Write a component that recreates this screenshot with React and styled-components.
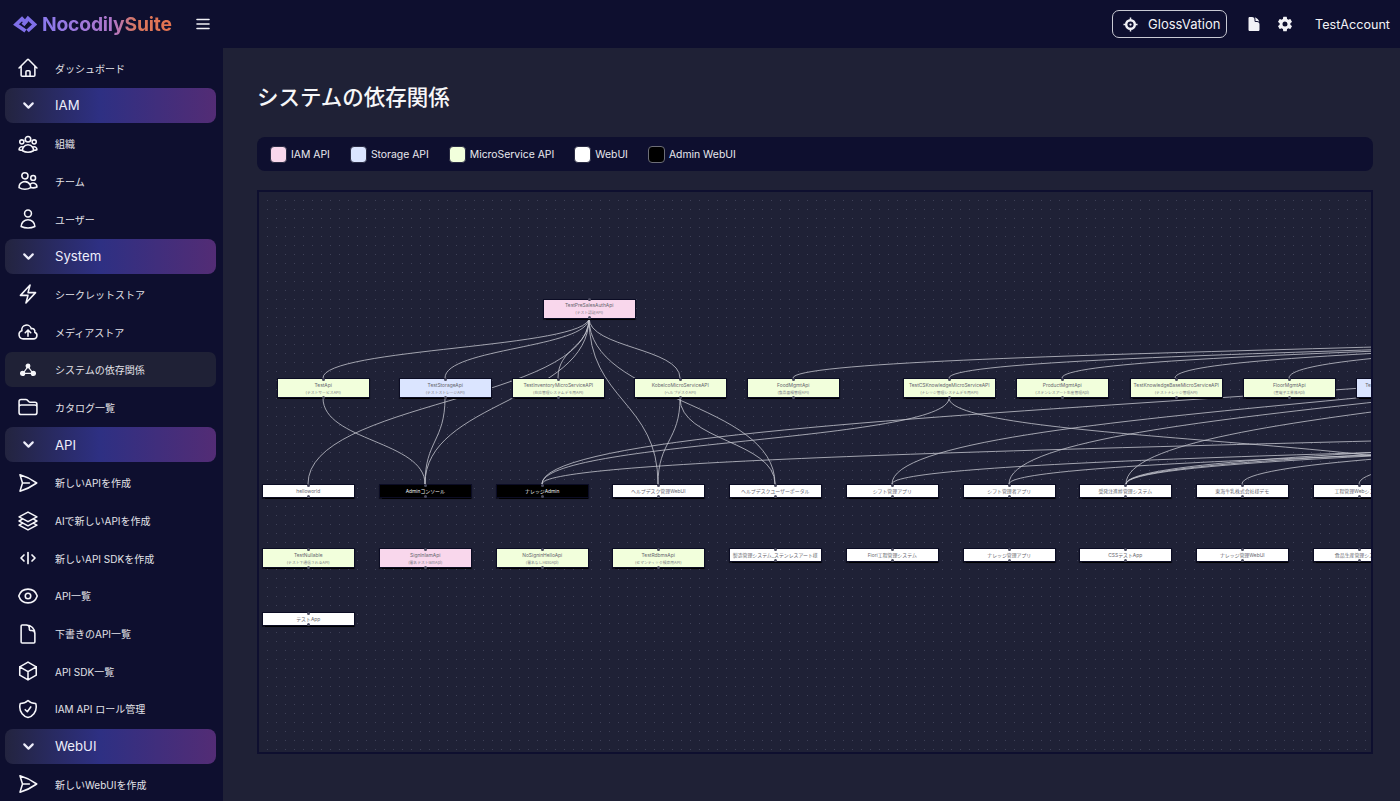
import React from 'react';
import styled, { createGlobalStyle } from 'styled-components';
import {
  HiOutlineHome, HiOutlineUserGroup, HiOutlineUsers, HiOutlineUser, HiOutlineBolt,
  HiOutlineCloudArrowUp, HiOutlineFolder, HiOutlinePaperAirplane, HiOutlineSquare3Stack3D,
  HiOutlineEye, HiOutlineDocument, HiOutlineCube, HiOutlineShieldCheck,
  HiDocument,
} from 'react-icons/hi2';
import { IoSettingsSharp } from 'react-icons/io5';
import { ChevronDown } from 'lucide-react';

const Global = createGlobalStyle`
  html, body { margin: 0; height: 100%; overflow: hidden; background: #1f2136; }
  body, button { font-family: Inter, "Noto Sans CJK JP", sans-serif; }
  #root { height: 100%; }
`;

const Shell = styled.div`
  display: flex; flex-direction: column; height: 801px; overflow: hidden; color: #f2f2f6;
`;
const Header = styled.header`
  flex: 0 0 48px; display: flex; align-items: center; background: #0e0f2f; padding: 0 10px 0 13px;
`;
const Brand = styled.div`display: flex; align-items: center; gap: 5px; width: 182px;`;
const BrandName = styled.span`
  font-size: 19.3px; font-weight: 700; letter-spacing: -0.2px;
  background: linear-gradient(90deg, #8a79ee 0%, #b076c8 55%, #d9775f 72%, #e5734f 100%);
  -webkit-background-clip: text; background-clip: text; color: transparent;
`;
const Burger = styled.button`
  border: 0; background: none; color: #f2f2f6; padding: 0; display: flex;
`;
const HeaderRight = styled.div`margin-left: auto; display: flex; align-items: center;`;
const TenantButton = styled.button`
  display: flex; align-items: center; gap: 10px; height: 28px; width: 115px; padding: 0 0 0 10px;
  border: 1px solid #c9cad3; border-radius: 7px; background: none; color: #f2f2f6;
  font-size: 13px; margin-right: 19px;
`;
const HeaderIcon = styled.span`display: flex; font-size: ${p => p.$size}px; margin-right: ${p => p.$gap}px;`;
const Account = styled.span`font-size: 12.6px;`;

const Body = styled.div`flex: 1; display: flex; min-height: 0;`;
const Sidebar = styled.nav`
  flex: 0 0 223px; background: #0e0f2f; padding: 2.3px 7px 0 5px; box-sizing: border-box;
  display: flex; flex-direction: column; gap: 2.7px; overflow: hidden;
`;
const Item = styled.a`
  flex: 0 0 35px; display: flex; align-items: center; border-radius: 7px; font-size: 10px; padding-top: 1px;
  box-sizing: border-box; color: #e2e2e8; background: ${p => (p.$active ? '#1f2136' : 'transparent')};
`;
const ItemIcon = styled.span`
  flex: 0 0 50px; display: flex; justify-content: center; padding-right: 4px; box-sizing: border-box;
  font-size: 22px; color: #f6f6fa;
  & svg { stroke-width: 1.7; }
`;
const Group = styled.div`
  flex: 0 0 35px; display: flex; align-items: center; border-radius: 8px; font-size: 13.2px; color: #eeeefb;
  background: linear-gradient(90deg, #23243f 0%, #2e3083 45%, #532c75 100%);
`;
const Chevron = styled.span`
  flex: 0 0 50px; display: flex; justify-content: center; padding-right: 4px; box-sizing: border-box;
`;

const Main = styled.main`flex: 1; padding: 33px 27px 0 34px; min-width: 0; display: flex; flex-direction: column;`;
const Title = styled.h1`margin: 0 0 24px; font-size: 21.5px; line-height: 32px; font-weight: 500; color: #f6f6f8;`;
const Legend = styled.div`
  display: flex; align-items: center; height: 34px; background: #0e0f2f; border-radius: 8px;
  padding-left: 13px; margin-bottom: 19px; font-size: 10.4px; color: #e8e8ee;
`;
const LegendItem = styled.div`display: flex; align-items: center; gap: 4px; margin-right: 20px;`;
const Swatch = styled.span`
  width: 17px; height: 17px; box-sizing: border-box; border-radius: 4px; background: ${p => p.$color};
  border: 1px solid ${p => (p.$color === '#000000' ? '#6d6e78' : '#2b2c44')};
`;

const Canvas = styled.section`
  position: relative; height: 564px; box-sizing: border-box; overflow: hidden; border: 2px solid #0e0f2f;
  background-color: #1f2136;
  background-image: radial-gradient(circle, #3f4158 0.6px, transparent 0.8px);
  background-size: 9px 9px; background-position: 4px 4px;
`;
const Edges = styled.svg`position: absolute; left: 0; top: 0; width: 100%; height: 100%;`;
const Node = styled.div`
  position: absolute; box-sizing: border-box; width: 92.5px; height: ${p => (p.$sub ? 20 : 13.5)}px;
  display: flex; flex-direction: column; align-items: center; justify-content: center; gap: 2px;
  border: 0.6px solid #0b0c24; box-shadow: 0 0.5px 1px #000;
  background: ${p => p.$bg}; color: ${p => (p.$bg === '#000000' ? '#f0f0f0' : '#66666e')};
  white-space: nowrap; overflow: visible;
`;
const NodeTitle = styled.span`font-size: 4.9px; line-height: 6px;`;
const NodeSub = styled.span`font-size: 3.8px; line-height: 5px; color: #7f7f87;`;
const Handle = styled.i`
  position: absolute; left: 50%; width: 3px; height: 3px; margin-left: -1.5px; border-radius: 50%;
  background: #4b4c60; ${p => (p.$top ? 'top: -1.5px;' : 'bottom: -1.5px;')}
`;

const PINK = '#f9d7ec', BLUE = '#dbe5ff', GREEN = '#f2ffdc', WHITE = '#ffffff', BLACK = '#000000';
const OX = 260, OY = 192;

const nodes = [
  [544, 298.5, PINK, 'TestPreSalesAuthApi', '(テスト認証API)'],
  [278, 378, GREEN, 'TestApi', '(テストサービスAPI)'],
  [400, 378, BLUE, 'TestStorageApi', '(テストストレージAPI)'],
  [513, 378, GREEN, 'TestInventoryMicroServiceAPI', '(在庫管理システムデモ用API)'],
  [635, 378, GREEN, 'KobelcoMicroServiceAPI', '(ヘルプデスクAPI)'],
  [748, 378, GREEN, 'FoodMgmtApi', '(食品面検管理API)'],
  [904, 378, GREEN, 'TestCSKnowledgeMicroServiceAPI', '(ナレッジ管理システムデモ用API)'],
  [1017, 378, GREEN, 'ProductMgmtApi', '(ステンレスアート生産管理Api)'],
  [1131, 378, GREEN, 'TestKnowledgeBaseMicroServiceAPI', '(テストナレッジ管理API)'],
  [1244, 378, GREEN, 'FloorMgmtApi', '(豊電子工業株Api)'],
  [1357, 378, BLUE, 'TestFileStorageMicroServiceAPI', '(テストストレージAPI)'],
  [263, 484, WHITE, 'helloworld'],
  [380, 484, BLACK, 'Adminコンソール'],
  [497, 484, BLACK, 'ナレッジAdmin'],
  [613, 484, WHITE, 'ヘルプデスク管理WebUI'],
  [730, 484, WHITE, 'ヘルプデスクユーザーポータル'],
  [847, 484, WHITE, 'シフト管理アプリ'],
  [964, 484, WHITE, 'シフト管理者アプリ'],
  [1080, 484, WHITE, '受発注進捗管理システム'],
  [1197, 484, WHITE, '東海牛乳株式会社様デモ'],
  [1314, 484, WHITE, '工程管理Webシステム'],
  [263, 548, GREEN, 'TestNullable', '(テスト下通信されるAPI)'],
  [380, 548, PINK, 'SignInIamApi', '(署名テストIamApi)'],
  [497, 548, GREEN, 'NoSigninHelloApi', '(署名なしHelloApi)'],
  [613, 548, GREEN, 'TestRdbmsApi', '(セマンティック検索用API)'],
  [730, 548, WHITE, '製造管理システム_ステンレスアート様'],
  [847, 548, WHITE, 'Fiori工程管理システム'],
  [964, 548, WHITE, 'ナレッジ管理アプリ'],
  [1080, 548, WHITE, 'CSSテストApp'],
  [1197, 548, WHITE, 'ナレッジ管理WebUI'],
  [1314, 548, WHITE, '食品生産管理システム'],
  [263, 612, WHITE, 'テストApp'],
];

const edges = [
  [590, 318, 324, 378], [590, 318, 446, 378], [590, 318, 559, 378], [590, 318, 681, 378],
  [590, 318, 309, 484], [590, 318, 426, 484], [590, 318, 659, 484], [590, 318, 776, 484],
  [324, 398, 426, 484], [446, 398, 426, 484], [681, 398, 659, 484], [681, 398, 776, 484],
  [950, 398, 543, 484], [950, 398, 1477, 484],
  [1800, 318, 543, 484], [2203, 398, 543, 484],
  [1760, 318, 893, 484], [2800, 398, 893, 484],
  [1760, 318, 1010, 484], [2800, 398, 1010, 484],
  [1790, 318, 1127, 484], [2100, 398, 1127, 484], [2260, 398, 1127, 484], [2400, 398, 1127, 484],
  [2133, 398, 1243, 484], [2030, 398, 1360, 484],
  [1884, 318, 794, 378], [1909, 318, 950, 378], [1850, 318, 1063, 378],
  [1780, 318, 1176, 378], [1720, 318, 1290, 378], [1720, 318, 1403, 378],
];

const TripleNodes = () => (
  <svg width="16" height="14" viewBox="0 0 16 14" fill="currentColor" stroke="currentColor">
    <circle cx="8" cy="3" r="1.6" /><circle cx="2.6" cy="10.4" r="1.8" /><circle cx="13.4" cy="10.4" r="1.8" />
    <path d="M8 3.5 L3 10.4 H13 Z" fill="none" strokeWidth="1.2" />
  </svg>
);
const CodeMark = () => (
  <svg width="20" height="20" viewBox="0 0 20 20" fill="none" stroke="currentColor" strokeWidth="1.5" strokeLinecap="round" strokeLinejoin="round">
    <path d="M6 7 L3 10 L6 13" /><path d="M14 7 L17 10 L14 13" /><path d="M10 4.5 V15.5" />
  </svg>
);
const Logo = () => (
  <svg width="24" height="19" viewBox="0 0 24 19" fill="none" stroke="#7f6fe8" strokeWidth="3.7" strokeLinejoin="miter">
    <path d="M12.5 16 L3 9.5 L9 3.8 L13.5 8.5" />
    <path d="M10 10 L15 3.5 L21.5 9.5 L14.5 16" />
  </svg>
);
const Crosshair = () => (
  <svg width="15" height="15" viewBox="0 0 16 16" fill="none" stroke="currentColor">
    <circle cx="8" cy="8" r="4.6" strokeWidth="2.6" />
    <path d="M8 0.5 V4 M8 12 V15.5 M0.5 8 H4 M12 8 H15.5" strokeWidth="1.6" />
    <circle cx="8" cy="8" r="1.2" fill="currentColor" stroke="none" />
  </svg>
);
const Bars = () => (
  <svg width="16" height="16" viewBox="0 0 16 16" fill="none" stroke="currentColor" strokeWidth="1.6" strokeLinecap="round">
    <path d="M2 3.5 H14 M2 8 H14 M2 12.5 H14" />
  </svg>
);

const menu = [
  { label: 'ダッシュボード', icon: <HiOutlineHome /> },
  { group: 'IAM' },
  { label: '組織', icon: <HiOutlineUserGroup /> },
  { label: 'チーム', icon: <HiOutlineUsers /> },
  { label: 'ユーザー', icon: <HiOutlineUser /> },
  { group: 'System' },
  { label: 'シークレットストア', icon: <HiOutlineBolt /> },
  { label: 'メディアストア', icon: <HiOutlineCloudArrowUp /> },
  { label: 'システムの依存関係', icon: <TripleNodes />, active: true },
  { label: 'カタログ一覧', icon: <HiOutlineFolder /> },
  { group: 'API' },
  { label: '新しいAPIを作成', icon: <HiOutlinePaperAirplane /> },
  { label: 'AIで新しいAPIを作成', icon: <HiOutlineSquare3Stack3D /> },
  { label: '新しいAPI SDKを作成', icon: <CodeMark /> },
  { label: 'API一覧', icon: <HiOutlineEye /> },
  { label: '下書きのAPI一覧', icon: <HiOutlineDocument /> },
  { label: 'API SDK一覧', icon: <HiOutlineCube /> },
  { label: 'IAM API ロール管理', icon: <HiOutlineShieldCheck /> },
  { group: 'WebUI' },
  { label: '新しいWebUIを作成', icon: <HiOutlinePaperAirplane /> },
];

const legend = [
  ['IAM API', PINK], ['Storage API', BLUE], ['MicroService API', GREEN], ['WebUI', WHITE], ['Admin WebUI', BLACK],
];

const curve = ([x1, y1, x2, y2]) => {
  const a = x1 - OX, b = y1 - OY, c = x2 - OX, d = y2 - OY, m = (b + d) / 2;
  return `M${a} ${b} C${a} ${m} ${c} ${m} ${c} ${d}`;
};

export default function App() {
  return (
    <Shell>
      <Global />
      <Header>
        <Brand>
          <Logo />
          <BrandName>NocodilySuite</BrandName>
        </Brand>
        <Burger aria-label="menu"><Bars /></Burger>
        <HeaderRight>
          <TenantButton><Crosshair />GlossVation</TenantButton>
          <HeaderIcon $size={16} $gap={15}><HiDocument /></HeaderIcon>
          <HeaderIcon $size={16} $gap={22}><IoSettingsSharp /></HeaderIcon>
          <Account>TestAccount</Account>
        </HeaderRight>
      </Header>
      <Body>
        <Sidebar>
          {menu.map(m => m.group ? (
            <Group key={m.group}><Chevron><ChevronDown size={17} strokeWidth={3} /></Chevron>{m.group}</Group>
          ) : (
            <Item key={m.label} $active={m.active}><ItemIcon>{m.icon}</ItemIcon>{m.label}</Item>
          ))}
        </Sidebar>
        <Main>
          <Title>システムの依存関係</Title>
          <Legend>
            {legend.map(([name, color]) => (
              <LegendItem key={name}><Swatch $color={color} />{name}</LegendItem>
            ))}
          </Legend>
          <Canvas>
            <Edges fill="none" stroke="#c4c5ce" strokeWidth="0.8">
              {edges.map((e, i) => <path key={i} d={curve(e)} />)}
            </Edges>
            {nodes.map(([x, y, bg, title, sub]) => (
              <Node key={title} $bg={bg} $sub={!!sub} style={{ left: x - OX, top: y - OY }}>
                <Handle $top />
                <NodeTitle>{title}</NodeTitle>
                {sub && <NodeSub>{sub}</NodeSub>}
                <Handle />
              </Node>
            ))}
          </Canvas>
        </Main>
      </Body>
    </Shell>
  );
}
